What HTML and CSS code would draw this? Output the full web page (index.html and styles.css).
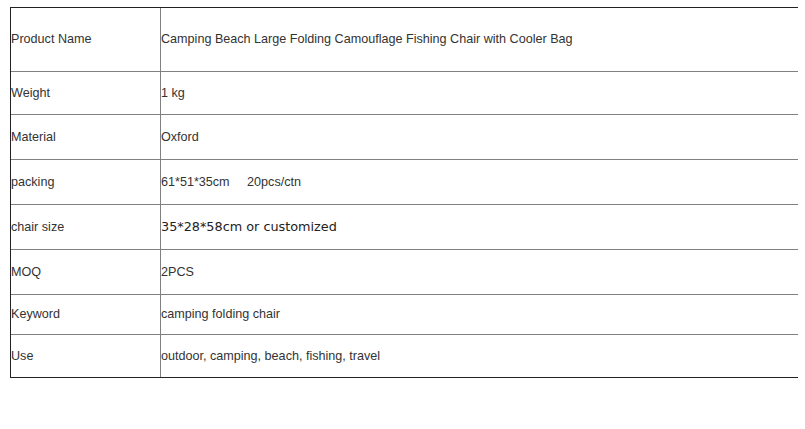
FILE: index.html
```html
<!DOCTYPE html>
<html>
<head>
<meta charset="utf-8">
<link rel="stylesheet" href="styles.css">
</head>
<body>
<div class="wrap">
<table class="spec">
<tr class="r1"><td class="k">Product Name</td><td class="v">Camping Beach Large Folding Camouflage Fishing Chair with Cooler Bag</td></tr>
<tr class="r2"><td class="k">Weight</td><td class="v">1 kg</td></tr>
<tr class="r3"><td class="k">Material</td><td class="v">Oxford</td></tr>
<tr class="r3"><td class="k">packing</td><td class="v">61*51*35cm&nbsp;&nbsp;&nbsp;&nbsp; 20pcs/ctn</td></tr>
<tr class="r3"><td class="k">chair size</td><td class="v alt">35*28*58cm or customized</td></tr>
<tr class="r3"><td class="k">MOQ</td><td class="v">2PCS</td></tr>
<tr class="r7"><td class="k">Keyword</td><td class="v">camping folding chair</td></tr>
<tr class="r8"><td class="k">Use</td><td class="v">outdoor, camping, beach, fishing, travel</td></tr>
</table>
</div>
</body>
</html>
```
FILE: styles.css
```css
html, body { margin: 0; padding: 0; background: #fff; }
.wrap {
  margin: 7px 0 0 10px;
  width: 788px;
  overflow: hidden;
}
.spec {
  border-collapse: separate;
  border-spacing: 0;
  border: 1px solid #222;
  border-right: none;
  width: 820px;
  font-family: "Liberation Sans", Arial, sans-serif;
  font-size: 12.6px;
  color: #333;
}
.spec td {
  padding: 0 0 1px 0;
  vertical-align: middle;
  border-bottom: 1px solid #808080;
}
.spec tr:last-child td { border-bottom: none; }
.spec td.k {
  width: 149px;
  border-right: 1px solid #808080;
}
.spec td.alt {
  font-family: "DejaVu Sans", Verdana, sans-serif;
  font-size: 12.8px;
  color: #222;
}
.r1 { height: 64px; }
.r2 { height: 43px; }
.r3 { height: 45px; }
.r7 { height: 40px; }
.r8 { height: 42px; }
```
